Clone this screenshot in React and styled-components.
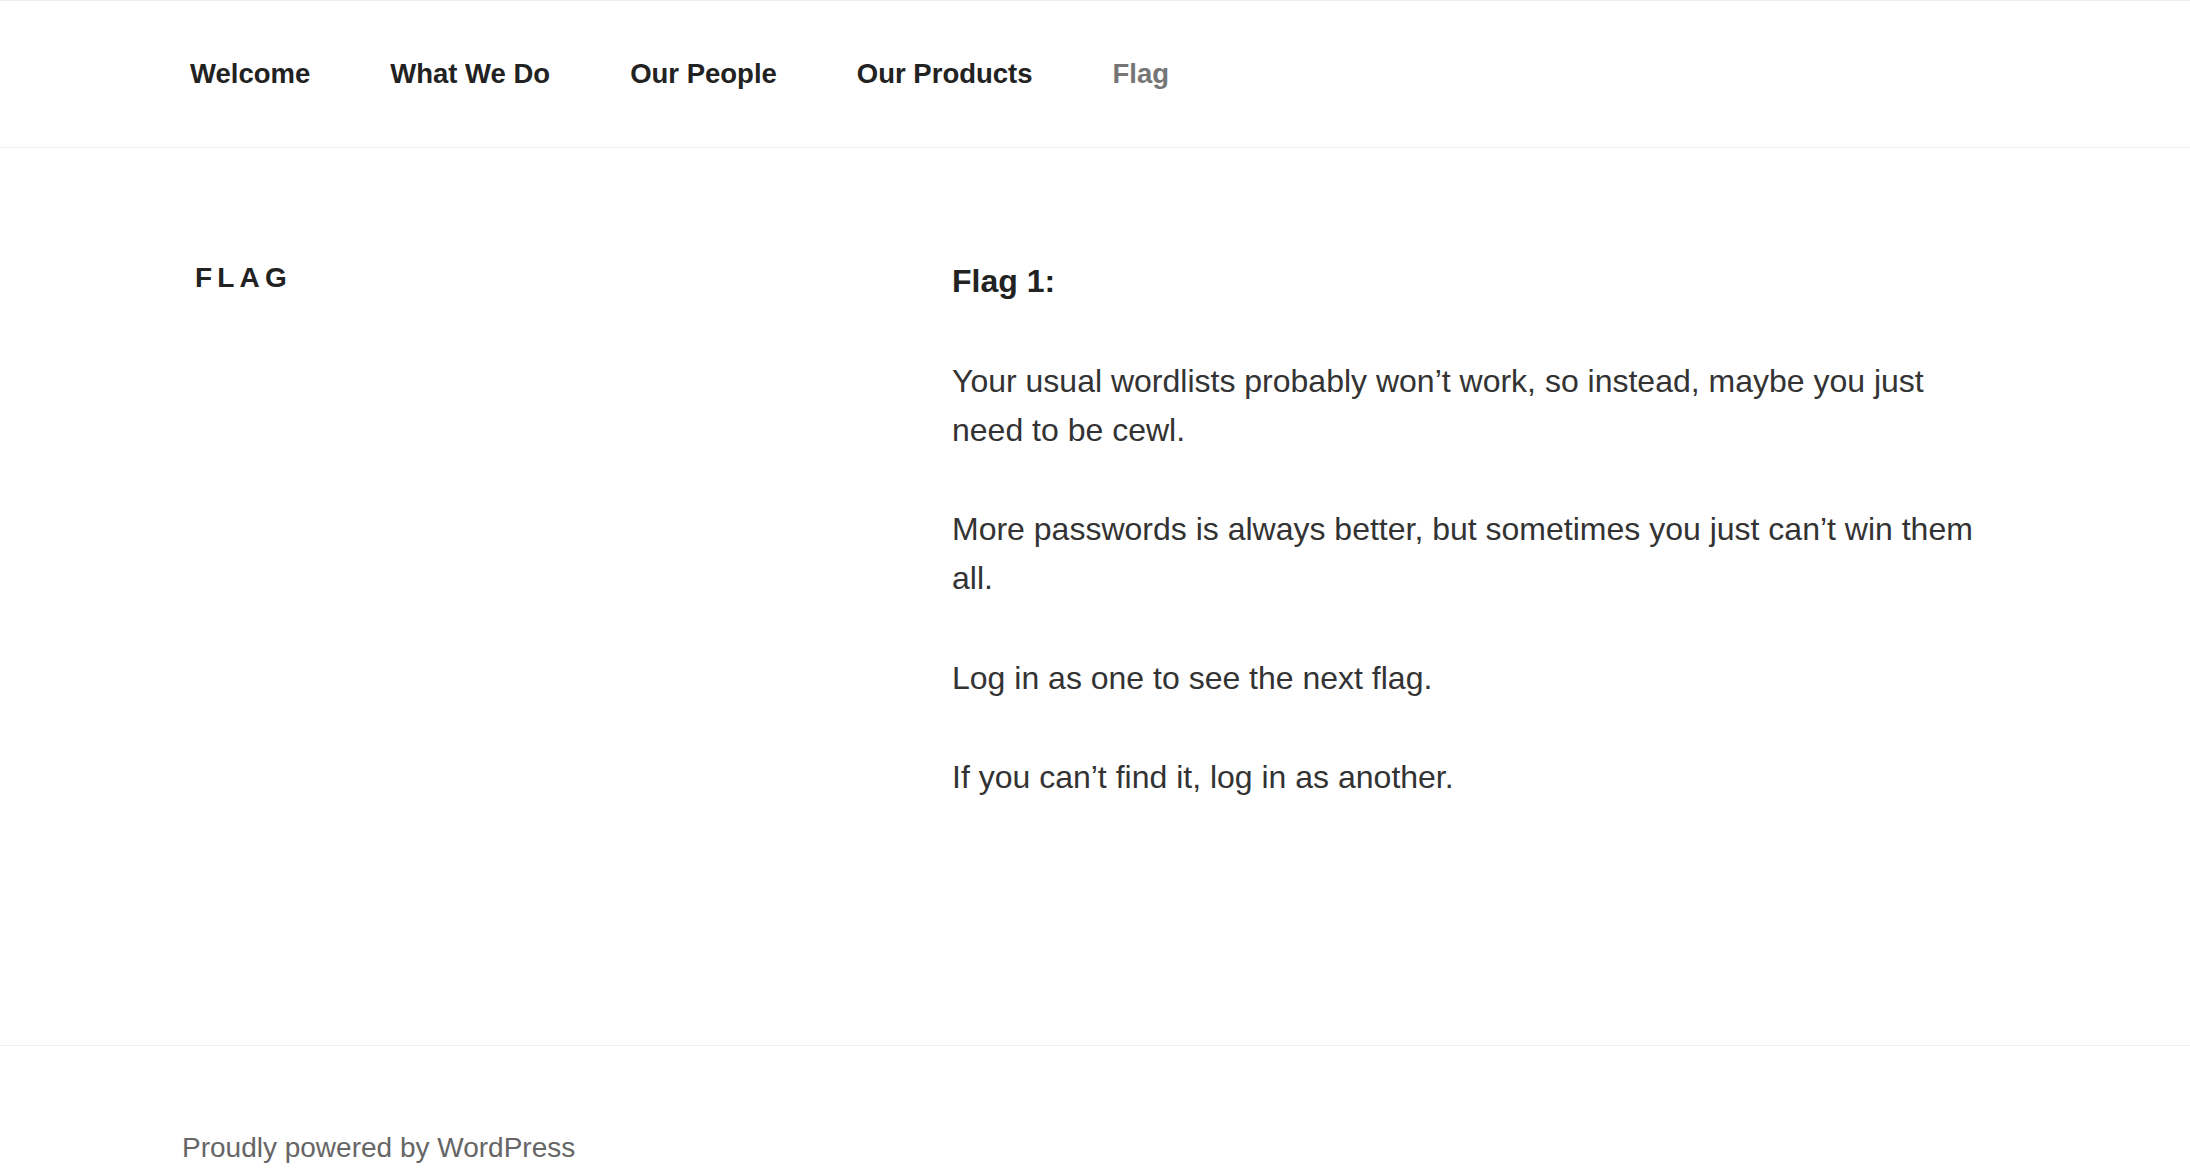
import styled, { createGlobalStyle } from "styled-components";

const GlobalStyle = createGlobalStyle`
  html, body {
    margin: 0;
    padding: 0;
    background: #fff;
  }
  body {
    font-family: "Liberation Sans", Arial, Helvetica, sans-serif;
    color: #333;
  }
  * {
    box-sizing: border-box;
  }
`;

const menu = ["Welcome", "What We Do", "Our People", "Our Products", "Flag"];

const paragraphs = [
  "Your usual wordlists probably won’t work, so instead, maybe you just need to be cewl.",
  "More passwords is always better, but sometimes you just can’t win them all.",
  "Log in as one to see the next flag.",
  "If you can’t find it, log in as another.",
];

const App = () => {
  return (
    <Page>
      <GlobalStyle />
      <TopNav>
        <Wrap>
          <Menu>
            {menu.map((item) => (
              <MenuItem key={item}>
                <MenuLink href="#" $current={item === "Flag"}>
                  {item}
                </MenuLink>
              </MenuItem>
            ))}
          </Menu>
        </Wrap>
      </TopNav>

      <Main>
        <Wrap>
          <Article>
            <EntryHeader>
              <EntryTitle>Flag</EntryTitle>
            </EntryHeader>
            <EntryContent>
              <Para>
                <strong>Flag 1:</strong>
              </Para>
              {paragraphs.map((text) => (
                <Para key={text}>{text}</Para>
              ))}
            </EntryContent>
          </Article>
        </Wrap>
      </Main>

      <Footer>
        <Wrap>
          <SiteInfo href="#">Proudly powered by WordPress</SiteInfo>
        </Wrap>
      </Footer>
    </Page>
  );
};

export default App;

const Page = styled.div`
  min-height: 100vh;
  background: #fff;
`;

const Wrap = styled.div`
  max-width: 1800px;
  margin: 0 auto;
`;

const TopNav = styled.nav`
  border-top: 1px solid #eee;
  border-bottom: 1px solid #eee;
  height: 148px;
  display: flex;
  align-items: center;
  > div {
    width: 100%;
  }
`;

const Menu = styled.ul`
  list-style: none;
  margin: 0 0 0 -5px;
  padding: 0;
  display: flex;
  gap: 80px;
`;

const MenuItem = styled.li`
  margin: 0;
`;

const MenuLink = styled.a`
  font-size: 27.5px;
  font-weight: 700;
  line-height: 40px;
  text-decoration: none;
  color: ${(p) => (p.$current ? "#767676" : "#222")};
`;

const Main = styled.main`
  padding: 109px 0 192px;
`;

const Article = styled.article`
  display: flex;
  justify-content: space-between;
  align-items: flex-start;
`;

const EntryHeader = styled.header`
  width: 36%;
`;

const EntryTitle = styled.h1`
  margin: 0;
  font-size: 28px;
  font-weight: 800;
  line-height: 42px;
  letter-spacing: 5.2px;
  text-transform: uppercase;
  color: #222;
`;

const EntryContent = styled.div`
  width: calc(58% - 1px);
`;

const Para = styled.p`
  margin: 0 0 50.5px;
  font-size: 32px;
  line-height: 49px;
  color: #333;

  strong {
    color: #222;
    font-weight: 700;
  }
`;

const Footer = styled.footer`
  border-top: 1px solid #eee;
  padding-top: 81px;
`;

const SiteInfo = styled.a`
  display: inline-block;
  margin-left: -13px;
  font-size: 28px;
  line-height: 42px;
  color: #666;
  text-decoration: none;
`;
